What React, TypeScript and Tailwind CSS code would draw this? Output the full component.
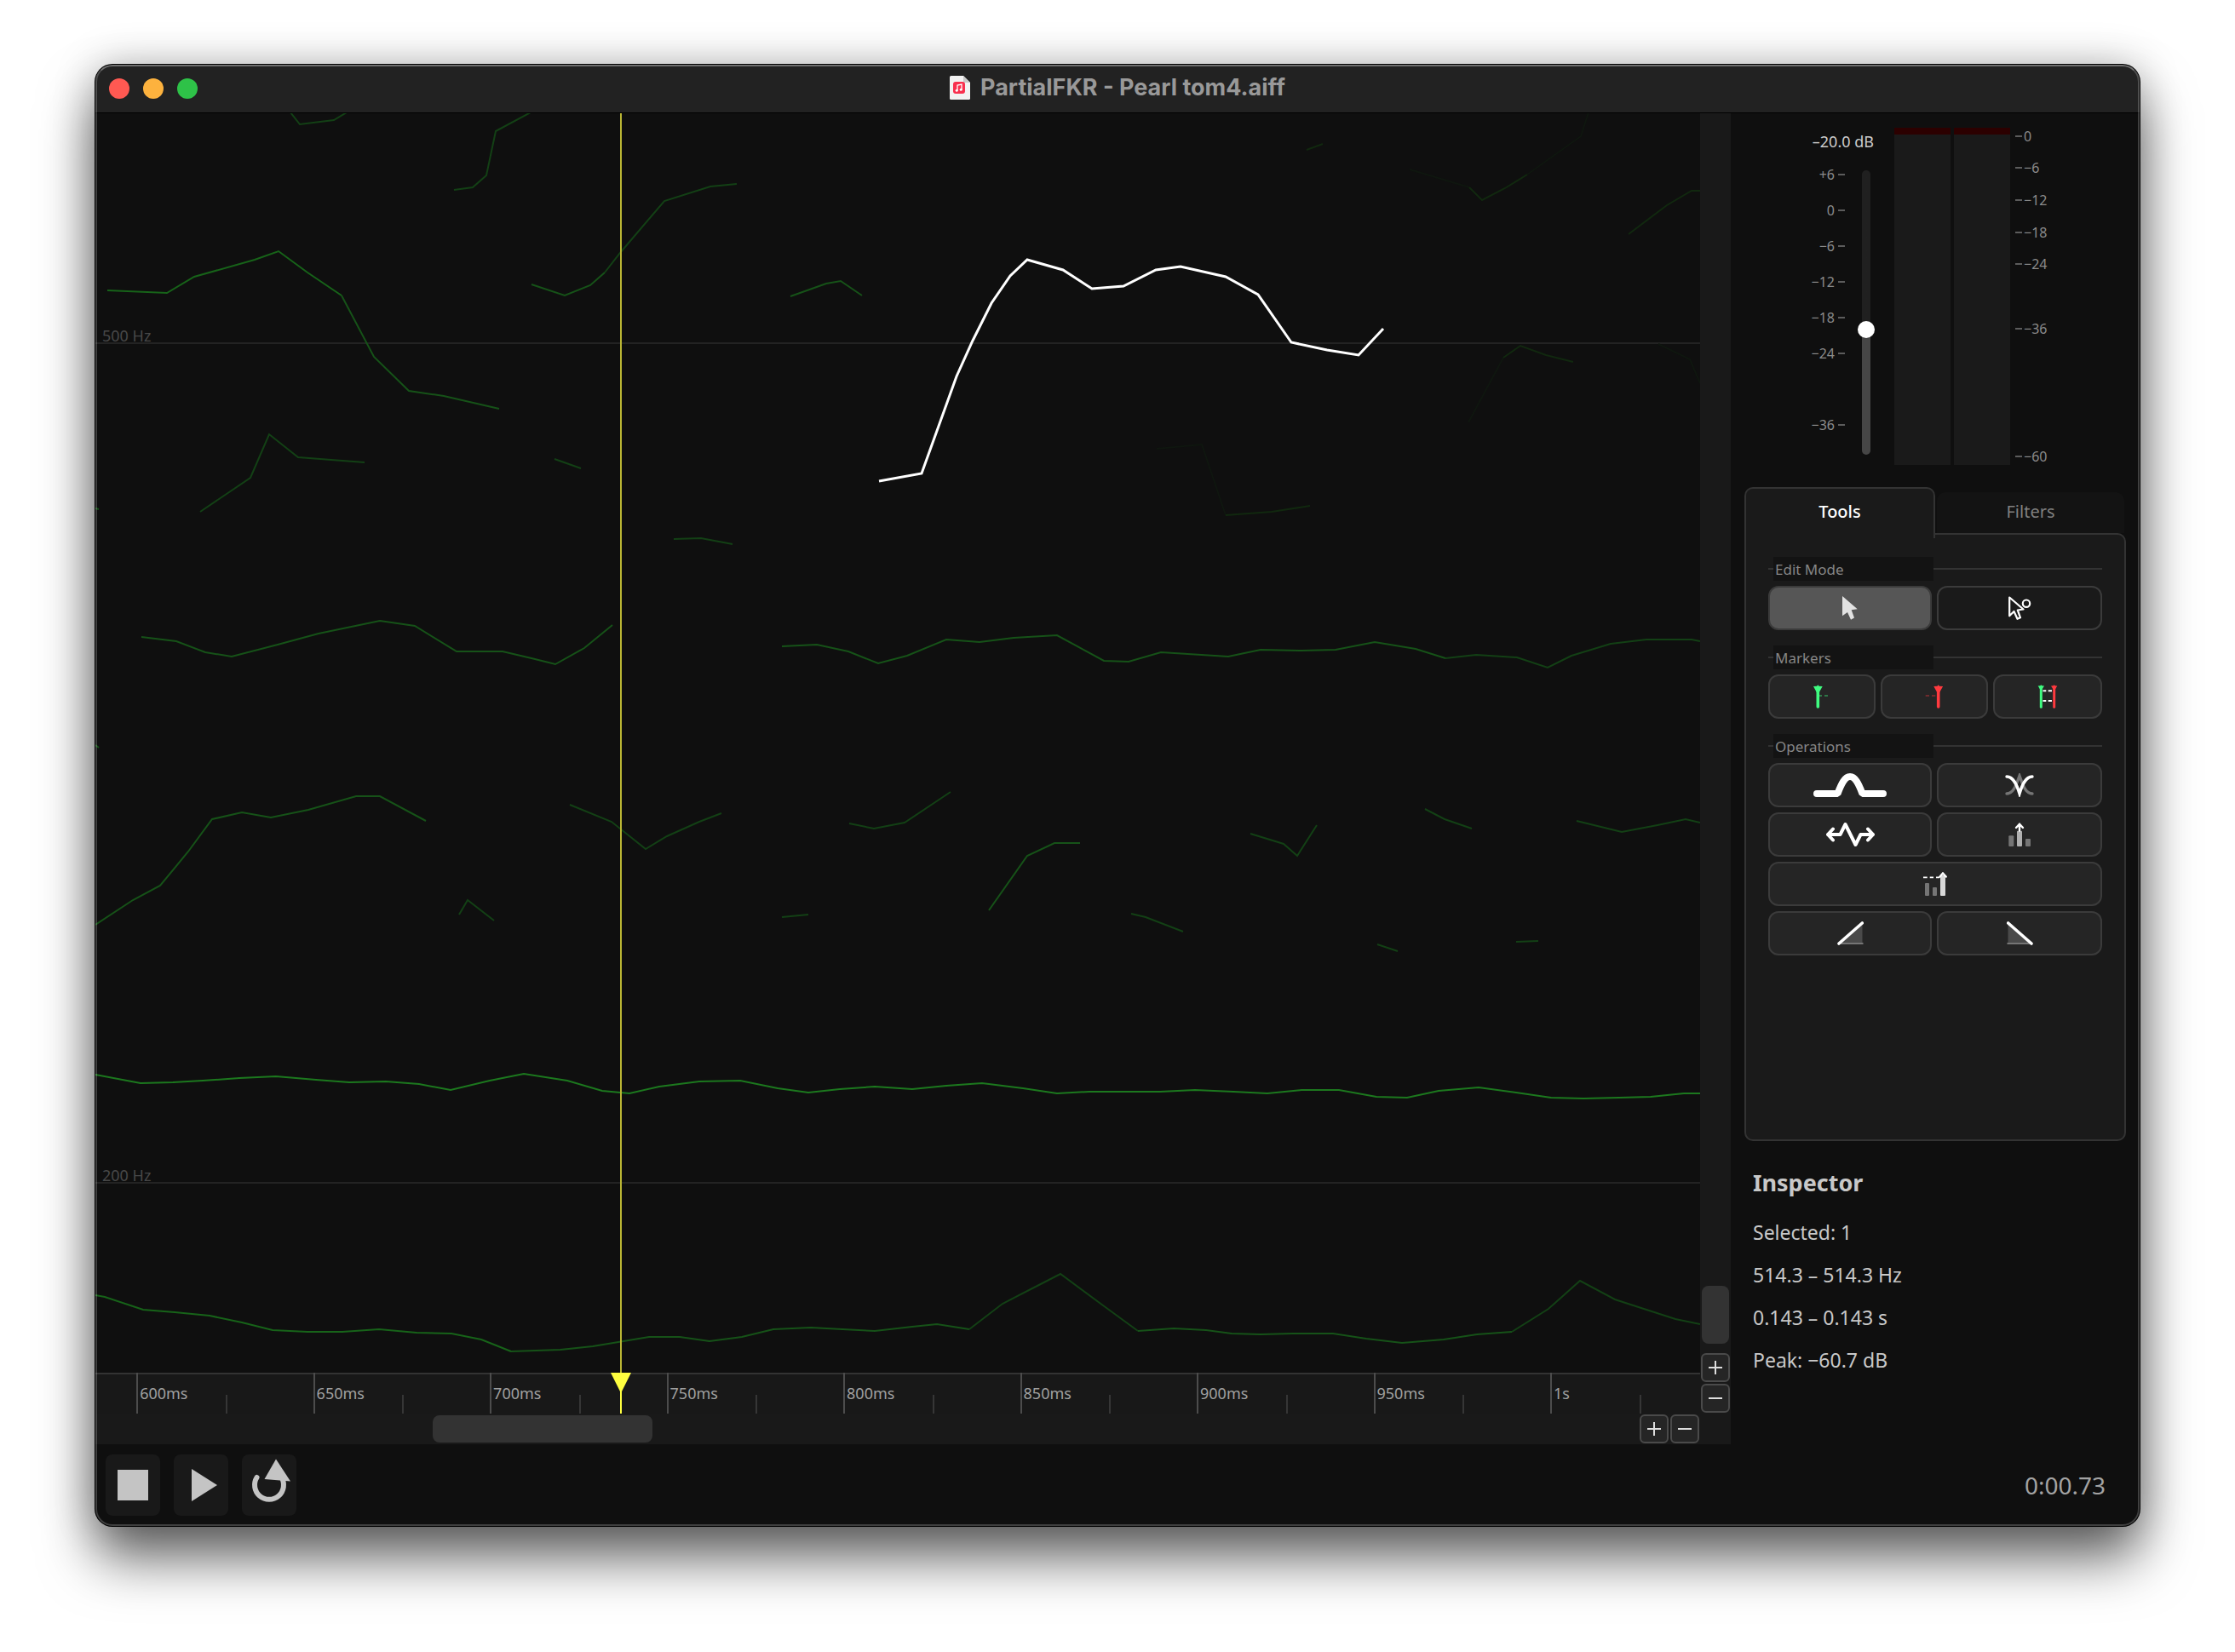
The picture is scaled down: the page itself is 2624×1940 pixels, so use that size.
import { useState } from 'react';
import type { ReactNode } from 'react';

const STROKES = {
  bright: '#1c781e',
  strong: '#176319',
  mid: '#165218',
  soft: '#134015',
  faint: '#11280f',
  ghost: '#0f160f',
};

type Trace = { level: keyof typeof STROKES; points: string };

const PARTIALS: Trace[] = [
  { level: 'soft', points: '341,132 352,146 392,141 407,132' },
  { level: 'soft', points: '533,223 555,220 571,206 582,154 623,132' },
  { level: 'mid', points: '624,334 663,347 693,335 710,320' },
  { level: 'soft', points: '710,320 728,297 780,236 834,219 865,216' },
  { level: 'mid', points: '928,348 970,333 987,330 1012,347' },
  { level: 'strong', points: '126,341 196,344 228,325 299,305 327,295 361,320 401,347' },
  { level: 'mid', points: '401,347 439,419 480,459 521,465 586,480' },
  { level: 'soft', points: '235,601 294,561 316,510 350,537 428,543' },
  { level: 'soft', points: '651,539 682,550' },
  { level: 'mid', points: '112,597 116,598' },
  { level: 'faint', points: '1534,176 1553,169' },
  { level: 'ghost', points: '1655,199 1725,220' },
  { level: 'faint', points: '1725,220 1740,235 1767,221 1793,205' },
  { level: 'ghost', points: '1793,205 1856,160 1865,132' },
  { level: 'faint', points: '1912,275 1957,241 1986,224 1996,224' },
  { level: 'ghost', points: '1724,496 1765,420' },
  { level: 'faint', points: '1765,420 1785,406 1815,417 1847,425' },
  { level: 'ghost', points: '1947,404 1984,422 1996,450' },
  { level: 'ghost', points: '1358,527 1411,522 1439,605' },
  { level: 'faint', points: '1439,605 1493,601 1538,594' },
  { level: 'soft', points: '791,633 823,632 860,639' },
  {
    level: 'mid',
    points:
      '166,748 207,753 241,766 272,771 326,757 374,744 446,729 487,735 536,765 590,765 624,773 652,780 686,761 719,734',
  },
  {
    level: 'mid',
    points:
      '918,759 959,757 996,765 1031,779 1065,770 1111,751 1150,754 1190,749 1241,746 1296,776 1325,777 1363,766 1442,771 1480,763 1528,764 1568,763 1614,754 1662,762 1697,773',
  },
  {
    level: 'soft',
    points: '1697,773 1733,769 1781,772 1817,784 1845,770 1891,756 1933,751 1986,751 1996,753',
  },
  { level: 'mid', points: '112,875 116,878' },
  {
    level: 'mid',
    points: '112,1086 156,1057 188,1040 221,1000 249,962 284,954 318,960 362,951 418,935 446,935 500,964',
  },
  { level: 'soft', points: '539,1074 549,1057 580,1081' },
  { level: 'soft', points: '669,945 718,965 758,997 783,982 821,965 847,955' },
  { level: 'soft', points: '918,1077 949,1074' },
  { level: 'soft', points: '997,967 1026,973 1062,966 1116,930' },
  { level: 'mid', points: '1161,1069 1206,1005 1238,990 1268,990' },
  { level: 'soft', points: '1328,1073 1345,1077 1389,1094' },
  { level: 'soft', points: '1468,979 1507,991 1523,1005 1546,969' },
  { level: 'soft', points: '1673,950 1696,962 1728,973' },
  { level: 'soft', points: '1851,964 1904,977 1946,969 1979,962 1996,966' },
  { level: 'soft', points: '1617,1109 1641,1117' },
  { level: 'soft', points: '1780,1106 1806,1105' },
  {
    level: 'bright',
    points:
      '112,1262 165,1272 203,1271 238,1269 281,1266 324,1264 371,1268 410,1271 453,1270 492,1273 529,1280 575,1269 615,1261 666,1269 707,1281 739,1284 774,1276 821,1270 869,1269 913,1278 949,1283 986,1279 1027,1276 1071,1279 1111,1275 1153,1272 1201,1278 1241,1284 1279,1282 1321,1282 1362,1282 1403,1280 1448,1282 1488,1284 1528,1280 1572,1280 1616,1288 1652,1289 1689,1281 1736,1277 1780,1283 1821,1289 1859,1290 1901,1289 1938,1288 1977,1284 1996,1284',
  },
  {
    level: 'strong',
    points:
      '112,1521 123,1523 168,1538 205,1541 246,1545 284,1553 320,1562 361,1564 402,1564 445,1561 489,1565 530,1566 565,1573 600,1587',
  },
  {
    level: 'mid',
    points:
      '600,1587 658,1585 696,1581 762,1570 798,1570 833,1575 871,1570 908,1561 952,1559 989,1561 1027,1563 1071,1558 1100,1555 1138,1561',
  },
  { level: 'soft', points: '1138,1561 1177,1531 1212,1513 1245,1496 1295,1533 1336,1563' },
  {
    level: 'mid',
    points:
      '1336,1563 1378,1560 1416,1562 1446,1566 1480,1567 1518,1566 1565,1566 1604,1572 1646,1577 1695,1573 1734,1567 1775,1564',
  },
  { level: 'soft', points: '1775,1564 1818,1537 1855,1504 1896,1526 1933,1538 1967,1549 1996,1555' },
];

const SELECTED =
  '1032,565 1082,556 1123,442 1142,400 1164,356 1186,324 1206,305 1248,317 1282,339 1319,336 1357,317 1386,313 1439,325 1477,346 1516,402 1558,411 1595,417 1624,386';

// Visible time range, in ms
const VIEW_START = 588.4;
const VIEW_LENGTH = 454;
const MAJOR_STEP = 50;
const RULER = ['600ms', '650ms', '700ms', '750ms', '800ms', '850ms', '900ms', '950ms', '1s'];
const PLAYHEAD = 737.1;

const percent = (ms: number) => `${(ms / VIEW_LENGTH) * 100}%`;

// null keeps an empty step on the scale
const FADER_SCALE = ['+6', '0', '−6', '−12', '−18', '−24', null, '−36'];
const METER_SCALE = ['0', '−6', '−12', '−18', '−24', null, '−36', null, null, null, '−60'];

const TitleBar = () => (
  <header className="flex h-[57px] shrink-0 items-center border-b border-black bg-[#222222] px-4">
    <div className="flex flex-1 gap-4">
      <button aria-label="Close" className="size-6 rounded-full bg-[#ff5952]" />
      <button aria-label="Minimize" className="size-6 rounded-full bg-[#fdb23e]" />
      <button aria-label="Zoom window" className="size-6 rounded-full bg-[#2ec248]" />
    </div>
    <div className="flex items-center gap-3 pb-0.5">
      <svg width="24" height="28" viewBox="0 0 24 28">
        <path d="M1.5 0H16L24 8V26.500Q24 28 22.500 28H1.500Q0 28 0 26.500V1.500Q0 0 1.500 0Z" fill="#f2f2f2" />
        <path d="M16 0L24 8H17.500Q16 8 16 6.500Z" fill="#c9c9c9" />
        <rect x="4" y="7" width="14" height="14" rx="3" fill="#f8304e" />
        <path d="M9 17V11L14 10V16" fill="none" stroke="#fff" strokeWidth="1.300" />
        <circle cx="8.200" cy="17.200" r="1.500" fill="#fff" />
        <circle cx="13.200" cy="16.200" r="1.500" fill="#fff" />
      </svg>
      <h1 className="font-['Inter',sans-serif] text-[27px] leading-8 font-bold text-[#999999]">
        PartialFKR - Pearl tom4.aiff
      </h1>
    </div>
    <div className="flex-1" />
  </header>
);

const PartialPlot = () => (
  <svg
    viewBox="112 133 1884 1479"
    preserveAspectRatio="none"
    className="block min-h-0 w-full flex-1 bg-[#0f0f0f]"
    role="img"
    aria-label="Partials"
  >
    <path d="M112 403H1996M112 1389H1996" stroke="#232323" strokeWidth="2" />
    <text x="120" y="401" fontSize="18" fill="#484848">500 Hz</text>
    <text x="120" y="1387" fontSize="18" fill="#484848">200 Hz</text>
    {PARTIALS.map((trace) => (
      <polyline
        key={trace.points}
        points={trace.points}
        fill="none"
        stroke={STROKES[trace.level]}
        strokeWidth="2"
      />
    ))}
    <polyline points={SELECTED} fill="none" stroke="#ffffff" strokeWidth="3" />
  </svg>
);

const TimeRuler = () => (
  <div className="flex h-12 shrink-0 overflow-hidden bg-[#181818] shadow-[inset_0_2px_#333333]">
    <div className="shrink-0" style={{ width: percent(600 - VIEW_START) }} />
    {RULER.map((label) => (
      <div
        key={label}
        className="grid shrink-0 grid-cols-2 border-l-2 border-[#4c4c4c]"
        style={{ width: percent(MAJOR_STEP) }}
      >
        <span className="self-center pl-0.5 text-[18px] leading-6 text-[#a0a0a0]">{label}</span>
        <span className="h-[22px] self-end border-l-2 border-[#363636]" />
      </div>
    ))}
  </div>
);

const ZoomButton = ({ label, minus }: { label: string; minus?: boolean }) => (
  <div className="flex size-9 shrink-0 items-center justify-center">
    <button
      aria-label={label}
      className="flex size-[34px] items-center justify-center rounded-md border-2 border-[#4a4a4a] bg-[#252525]"
    >
      <svg width="16" height="16" viewBox="0 0 16 16" stroke="#dddddd" strokeWidth="2">
        <path d={minus ? 'M0 8H16' : 'M0 8H16M8 0V16'} />
      </svg>
    </button>
  </div>
);

const Editor = () => (
  <section className="flex min-w-0 flex-1 bg-[#191919]">
    <div className="flex min-w-0 flex-1 flex-col">
      <div className="relative flex min-h-0 flex-1 flex-col">
        <PartialPlot />
        <TimeRuler />
        <div
          className="absolute inset-y-0 flex w-6 -translate-x-3 flex-col items-center"
          style={{ left: percent(PLAYHEAD - VIEW_START) }}
        >
          <div className="w-0.5 flex-1 bg-[#b9b534]" />
          <svg width="24" height="48" viewBox="0 0 24 48" fill="#ffff40">
            <path d="M0 0H24L13 22V48H11V22Z" />
          </svg>
        </div>
      </div>
      <div className="flex shrink-0">
        <div className="flex flex-1 items-center">
          <div className="flex-[396]" />
          <div className="h-8 flex-[258] rounded-lg bg-[#333333]" />
          <div className="flex-[1158]" />
        </div>
        <ZoomButton label="Zoom in time" />
        <ZoomButton label="Zoom out time" minus />
      </div>
    </div>
    <div className="flex w-9 shrink-0 flex-col pb-9">
      <div className="flex flex-1 flex-col items-center justify-end pb-2.5">
        <div className="h-[68px] w-8 rounded-lg bg-[#333333]" />
      </div>
      <ZoomButton label="Zoom in frequency" />
      <ZoomButton label="Zoom out frequency" minus />
    </div>
  </section>
);

const LevelMeters = () => {
  const [gain, setGain] = useState(-20);

  return (
    <section className="flex h-[439px] shrink-0 pl-20 text-[#8b8b8b]">
      <div className="flex w-[88px] flex-col pt-[21px]">
        <label htmlFor="gain" className="h-[30px] text-right text-[18px] leading-6 whitespace-nowrap text-[#cccccc]">
          {`–${Math.abs(gain).toFixed(1)} dB`}
        </label>
        <div className="flex justify-between">
          <ul className="w-[54px] text-[16px]">
            {FADER_SCALE.map((mark, i) => (
              <li key={i} className="flex h-[42px] items-center justify-end gap-1">
                {mark && (
                  <>
                    <span>{mark}</span>
                    <span className="h-0.5 w-2 bg-[#5c5c5c]" />
                  </>
                )}
              </li>
            ))}
          </ul>
          <input
            id="gain"
            type="range"
            min={-40}
            max={6}
            step={0.1}
            value={gain}
            onChange={(e) => setGain(Number(e.target.value))}
            className="mt-4 mr-1 h-[334px] w-2.5 appearance-none rounded-full bg-linear-to-t from-[#464646] from-44% to-[#202020] to-44% [direction:rtl] [writing-mode:vertical-lr] [&::-webkit-slider-thumb]:size-5 [&::-webkit-slider-thumb]:appearance-none [&::-webkit-slider-thumb]:rounded-full [&::-webkit-slider-thumb]:bg-white"
          />
        </div>
      </div>
      <div className="mt-[17px] ml-6 flex h-[396px] gap-1">
        <div className="w-[66px] border-t-8 border-[#2c0000] bg-[#1a1a1a]" />
        <div className="w-[66px] border-t-8 border-[#2c0000] bg-[#1a1a1a]" />
      </div>
      <ul className="mt-2 ml-1.5 grid h-[414px] auto-rows-fr text-[16px]">
        {METER_SCALE.map((mark, i) => (
          <li key={i} className="flex items-center gap-0.5">
            {mark && (
              <>
                <span className="h-0.5 w-2 bg-[#5c5c5c]" />
                <span>{mark}</span>
              </>
            )}
          </li>
        ))}
      </ul>
    </section>
  );
};

const Group = ({ title, children }: { title: string; children: ReactNode }) => (
  <section className="flex flex-col gap-1.5">
    <div className="flex items-center">
      <span className="h-0.5 w-1.5 bg-[#333333]" />
      <h3 className="h-7 w-[188px] bg-[#131313] pl-0.5 text-[17px] leading-[30px] text-[#868686]">{title}</h3>
      <span className="h-0.5 flex-1 bg-[#333333]" />
    </div>
    {children}
  </section>
);

const ToolButton = ({
  label,
  className = 'bg-[#252525]',
  children,
}: {
  label: string;
  className?: string;
  children: ReactNode;
}) => (
  <button
    aria-label={label}
    className={`flex h-[52px] items-center justify-center rounded-xl border-2 border-[#3b3b3b] ${className}`}
  >
    {children}
  </button>
);

const ToolsPanel = () => (
  <section className="mx-4 flex h-[768px] shrink-0 flex-col">
    <div className="flex h-[54px] items-end" role="tablist">
      <button
        role="tab"
        aria-selected="true"
        className="relative z-10 -mb-1.5 h-[60px] flex-1 rounded-t-[10px] border-2 border-b-0 border-[#333333] bg-[#1a1a1a] pb-1 text-[20px] font-medium text-white"
      >
        Tools
      </button>
      <button
        role="tab"
        aria-selected="false"
        className="mx-0.5 h-12 flex-1 rounded-t-[10px] bg-[#131313] pb-0.5 text-[20px] text-[#808080]"
      >
        Filters
      </button>
    </div>
    <div className="flex flex-1 flex-col gap-[18px] rounded-[10px] rounded-tl-none border-2 border-[#333333] bg-[#1a1a1a] px-[26px] pt-[26px]">
      <Group title="Edit Mode">
        <div className="grid grid-cols-[192fr_194fr] gap-1.5">
          <ToolButton label="Select" className="bg-[#565656]">
            <svg width="18" height="28" viewBox="0 0 18 28" fill="#e2e2e2">
              <path d="M0 0L17.700 15.300L10.700 16.300L14 25.500L10 27.700L6 19L0 23.300Z" />
            </svg>
          </ToolButton>
          <ToolButton label="Select points" className="bg-[#1a1a1a]">
            <svg width="27" height="28" viewBox="0 0 27 28" fill="none" stroke="#ffffff" strokeWidth="2.200">
              <path d="M1.200 1.500L17.500 15.500L10.800 16.500L14 25.300L10.500 26.800L6.500 18L1.200 23.300Z" strokeLinejoin="round" />
              <circle cx="21" cy="8.700" r="4.200" />
            </svg>
          </ToolButton>
        </div>
      </Group>
      <Group title="Markers">
        <div className="grid grid-cols-[126fr_126fr_128fr] gap-1.5">
          <ToolButton label="Set start marker">
            <svg width="28" height="28" viewBox="0 0 28 28" stroke="#3ffc80" fill="#3ffc80">
              <path d="M9.300 0.300L10.500 1.700L14.700 2L10.800 9H7.800L4 2L8.100 1.700Z" stroke="none" />
              <path d="M9.300 5V26" strokeWidth="3.600" strokeLinecap="round" />
              <path d="M11 13H14M17 13H21" strokeWidth="1.600" opacity="0.500" />
            </svg>
          </ToolButton>
          <ToolButton label="Set end marker">
            <svg width="28" height="28" viewBox="0 0 28 28" stroke="#ff3a3f" fill="#ff3a3f">
              <path d="M18.700 0.300L19.900 1.700L24.100 2L20.200 9H17.200L13.300 2L17.500 1.700Z" stroke="none" />
              <path d="M18.700 5V26" strokeWidth="3.600" strokeLinecap="round" />
              <path d="M3.700 13H8M11 13H15.300" strokeWidth="1.600" opacity="0.450" />
            </svg>
          </ToolButton>
          <ToolButton label="Markers to selection">
            <svg width="28" height="28" viewBox="0 0 28 28" strokeWidth="3" strokeLinecap="round">
              <path d="M8.500 7.300H12.300M14.700 7.300H19M8.500 19H12.300M14.700 19H19" stroke="#fff" strokeWidth="2" strokeLinecap="butt" />
              <path d="M6.300 0.300L7.300 1.300L10 1.500L7.500 5.500H5.100L2.700 1.500L5.300 1.300Z" fill="#3ffc80" />
              <path d="M6.300 3V26.300" stroke="#3ffc80" />
              <path d="M21.700 0.300L22.700 1.300L25.300 1.500L22.900 5.500H20.500L18 1.500L20.700 1.300Z" fill="#ff3a3f" />
              <path d="M21.700 3V26.300" stroke="#ff3a3f" />
            </svg>
          </ToolButton>
        </div>
      </Group>
      <Group title="Operations">
        <div className="grid grid-cols-[192fr_194fr] gap-1.5">
          <ToolButton label="Smooth">
            <svg width="86" height="28" viewBox="0 0 86 28" fill="none" stroke="#ffffff" strokeWidth="8" strokeLinecap="round" strokeLinejoin="bevel">
              <path d="M4 24H28.500C33 12 37 4 43 4S53 12 57.500 24H82" />
            </svg>
          </ToolButton>
          <ToolButton label="Flip">
            <svg width="34" height="28" viewBox="0 0 34 28" fill="none" strokeWidth="3.400" strokeLinecap="round">
              <path d="M2 24C10 24 13 14 17 3C21 14 24 24 32 24" stroke="#757575" />
              <path d="M2 4C10 4 14 14 17 24C20 14 24 4 32 4" stroke="#ffffff" />
            </svg>
          </ToolButton>
          <ToolButton label="Stretch">
            <svg width="57" height="28" viewBox="0 0 57 28" fill="none" stroke="#ffffff" strokeWidth="4" strokeLinecap="round" strokeLinejoin="round">
              <path d="M8 7.500L2 14L8 20.500M2 14H16.500L22.500 2L34.500 26L40.500 14H55M49 7.500L55 14L49 20.500" />
            </svg>
          </ToolButton>
          <ToolButton label="Amplify">
            <svg width="28" height="28" viewBox="0 0 28 28">
              <rect x="1.300" y="15.300" width="6" height="12.700" rx="1" fill="#757575" />
              <rect x="11" y="9.700" width="6" height="18.300" rx="1" fill="#b0b0b0" />
              <rect x="21" y="19" width="6" height="9" rx="1" fill="#757575" />
              <path d="M14 9.500V2M10 6L14 1.800L18 6" fill="none" stroke="#fff" strokeWidth="2.400" strokeLinecap="round" />
            </svg>
          </ToolButton>
          <ToolButton label="Normalize" className="col-span-2 bg-[#252525]">
            <svg width="28" height="28" viewBox="0 0 28 28">
              <rect x="2" y="13" width="5" height="15" rx="1" fill="#757575" />
              <rect x="11" y="18" width="5" height="10" rx="1" fill="#757575" />
              <rect x="20" y="4" width="6" height="24" rx="1" fill="#d8d8d8" />
              <path d="M0 6.300H4.700M7.700 6.300H12M15 6.300H19" stroke="#fff" strokeWidth="1.800" />
              <path d="M19.500 5.500L23 1.500L26.700 5.500" fill="none" stroke="#fff" strokeWidth="2.400" strokeLinecap="round" />
            </svg>
          </ToolButton>
          <ToolButton label="Fade in">
            <svg width="31" height="28" viewBox="0 0 31 28">
              <path d="M2 26L29.500 2V26Z" fill="#4a4a4a" />
              <path d="M3 26H30.500" stroke="#757575" strokeWidth="2" />
              <path d="M2 26L29.300 2" stroke="#fff" strokeWidth="3.600" strokeLinecap="round" />
            </svg>
          </ToolButton>
          <ToolButton label="Fade out">
            <svg width="31" height="28" viewBox="0 0 31 28">
              <path d="M29 26L1.500 2V26Z" fill="#4a4a4a" />
              <path d="M0.500 26H28" stroke="#757575" strokeWidth="2" />
              <path d="M29 26L1.700 2" stroke="#fff" strokeWidth="3.600" strokeLinecap="round" />
            </svg>
          </ToolButton>
        </div>
      </Group>
    </div>
  </section>
);

const Inspector = () => (
  <section className="mt-6 pl-[26px] text-[#c8c8c8]">
    <h2 className="mb-2 text-[27px] leading-[50px] font-bold">Inspector</h2>
    <div className="text-[23px] leading-[50px]">
      <p>Selected: 1</p>
      <p>514.3 – 514.3 Hz</p>
      <p>0.143 – 0.143 s</p>
      <p>Peak: −60.7 dB</p>
    </div>
  </section>
);

const TransportButton = ({ label, children }: { label: string; children: ReactNode }) => (
  <button aria-label={label} className="h-[72px] w-16 rounded-lg bg-[#191919]">
    <svg width="64" height="72" viewBox="0 0 64 72" fill="#c4c4c4">
      {children}
    </svg>
  </button>
);

const Transport = () => (
  <footer className="flex h-24 shrink-0 items-center gap-4 pr-10 pl-3">
    <TransportButton label="Stop">
      <rect x="14" y="18" width="36" height="36" />
    </TransportButton>
    <TransportButton label="Play">
      <path d="M21 17L51 36L21 55Z" />
    </TransportButton>
    <TransportButton label="Loop">
      <path d="M17.500 27A17 17 0 1 0 46.500 27" fill="none" stroke="#c4c4c4" strokeWidth="6" strokeLinecap="round" />
      <path d="M40 5.500L57 31.500L26.500 29Z" />
    </TransportButton>
    <time className="ml-auto text-[28px] text-[#a3a3a3]">0:00.73</time>
  </footer>
);

export default function App() {
  return (
    <div className="flex h-screen min-h-[1500px] flex-col bg-white px-28 pt-[76px] pb-[148px] font-['Noto_Sans','Open_Sans',sans-serif]">
      <main className="relative flex min-h-0 flex-1 flex-col overflow-hidden rounded-[20px] bg-[#0f0f0f] shadow-[0_0_0_1px_#000000,0_38px_64px_rgba(0,0,0,0.6),0_0_50px_rgba(0,0,0,0.24)]">
        <TitleBar />
        <div className="flex min-h-0 flex-1">
          <Editor />
          <aside className="flex w-[480px] shrink-0 flex-col">
            <LevelMeters />
            <ToolsPanel />
            <Inspector />
          </aside>
        </div>
        <Transport />
        <div className="pointer-events-none absolute inset-0 rounded-[20px] border-2 border-white/20 border-t-white/35" />
      </main>
    </div>
  );
}
